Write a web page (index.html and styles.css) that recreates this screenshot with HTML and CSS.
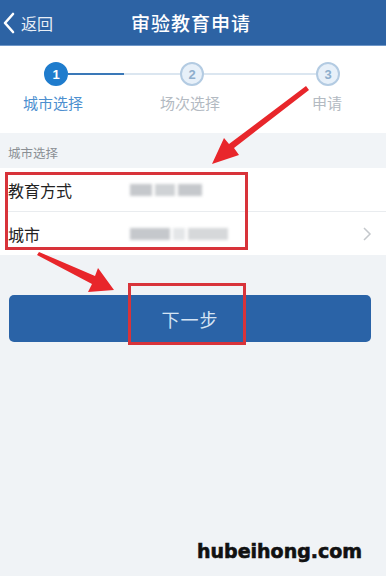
FILE: index.html
```html
<!DOCTYPE html>
<html lang="zh">
<head>
<meta charset="utf-8">
<link rel="stylesheet" href="styles.css">
</head>
<body>
<div class="page">
  <header class="nav">
    <div class="back">
      <svg class="chev" width="14" height="24" viewBox="0 0 14 24"><path d="M11 3 L3 12 L11 21" fill="none" stroke="#fff" stroke-width="2.6" stroke-linecap="round" stroke-linejoin="round"/></svg>
      <span>返回</span>
    </div>
    <div class="title">审验教育申请</div>
  </header>

  <section class="steps">
    <div class="track">
      <div class="circle active">1</div>
      <div class="line"><span class="fill"></span></div>
      <div class="circle">2</div>
      <div class="line"></div>
      <div class="circle">3</div>
    </div>
    <div class="labels">
      <span class="lab on">城市选择</span>
      <span class="lab">场次选择</span>
      <span class="lab">申请</span>
    </div>
  </section>

  <div class="sec-title">城市选择</div>

  <div class="list">
    <div class="row">
      <span class="key">教育方式</span>
      <span class="val"><i class="b1"></i><i class="b2"></i><i class="b3"></i></span>
    </div>
    <div class="row last">
      <span class="key">城市</span>
      <span class="val"><i class="b4"></i><i class="b5"></i><i class="b6"></i></span>
      <svg class="arrow" width="10" height="16" viewBox="0 0 10 16"><path d="M2 2 L8 8 L2 14" fill="none" stroke="#c4c8cc" stroke-width="1.5"/></svg>
    </div>
  </div>

  <div class="btn-wrap">
    <button class="btn">下一步</button>
  </div>

  <div class="mark">hubeihong.com</div>

  <div class="box box1"></div>
  <div class="box box2"></div>
  <svg class="anno" width="386" height="576" viewBox="0 0 386 576">
    <polygon points="306,86 309,90 234,148 239,155 212,164 224,138 229,144" fill="#e8262b"/>
    <polygon points="37,255 39,252 95,276 98,268 114,290 88,292 92,284" fill="#e8262b"/>
  </svg>
</div>
</body>
</html>
```
FILE: styles.css
```css
* { box-sizing: border-box; }
html, body { margin: 0; padding: 0; }
body {
  background: #f0f3f6;
  font-family: "Noto Sans CJK SC", "Noto Sans", sans-serif;
}
.page {
  position: relative;
  width: 386px;
  height: 576px;
  overflow: hidden;
  background: #f0f3f6;
}
.nav {
  position: relative;
  height: 46px;
  background: #2d63a4;
  border-bottom: 1px solid #6f97c8;
  display: flex;
  align-items: center;
  color: #fff;
}
.back {
  display: flex;
  align-items: center;
  gap: 5px;
  padding-left: 2px;
  font-size: 16px;
  color: #e8eef6;
}
.title {
  position: absolute;
  left: 0;
  right: 0;
  text-align: center;
  font-size: 19px;
  font-weight: 500;
  letter-spacing: 1px;
  padding-right: 4px;
  pointer-events: none;
}
.steps {
  background: #fff;
  height: 87px;
  padding-top: 16px;
}
.track {
  display: flex;
  align-items: center;
  padding: 0 46px 0 44px;
}
.circle {
  width: 24px;
  height: 24px;
  border-radius: 50%;
  border: 2px solid #b3cbe2;
  background: #e7f0f9;
  color: #8eaecd;
  font-size: 13px;
  font-weight: 700;
  display: flex;
  align-items: center;
  justify-content: center;
  flex: none;
  font-family: "Liberation Sans", sans-serif;
}
.circle.active {
  background: #1f7ccd;
  border-color: #1f7ccd;
  color: #fff;
}
.line {
  flex: 1;
  height: 2px;
  background: #dbe6f0;
  position: relative;
}
.line .fill {
  position: absolute;
  left: 0;
  top: 0;
  height: 2px;
  width: 56px;
  background: #3a78b8;
}
.labels {
  display: flex;
  justify-content: space-between;
  padding: 6px 19px 0 13px;
  font-size: 15px;
  color: #b3bac2;
}
.lab { width: 80px; text-align: center; }
.lab.on { color: #4d8fcf; }
.sec-title {
  height: 35px;
  padding: 10px 0 0 8px;
  font-size: 12.5px;
  color: #8a8f94;
  background: #f1f4f7;
}
.list {
  background: #fff;
  padding-left: 8px;
}
.row {
  height: 44px;
  display: flex;
  align-items: center;
  border-bottom: 1px solid #e9ecef;
  padding-right: 14px;
}
.row.last { border-bottom: none; height: 43px; }
.key {
  width: 122px;
  font-size: 16px;
  color: #222;
}
.val {
  display: flex;
  gap: 3px;
  filter: blur(1.8px);
  flex: 1;
}
.val i { display: block; height: 12px; background: #c5c8cc; }
.b1 { width: 22px; }
.b2 { width: 20px; background: #cfd2d5 !important; }
.b3 { width: 24px; }
.b4 { width: 40px; }
.b5 { width: 12px; background: #e4e6e8 !important; }
.b6 { width: 40px; background: #d6d8da !important; }
.arrow { flex: none; }
.btn-wrap {
  padding: 40px 15px 0 9px;
}
.btn {
  display: block;
  width: 100%;
  height: 47px;
  border: none;
  border-radius: 5px;
  background: #2a63a7;
  color: #d5e4f4;
  font-size: 18px;
  font-family: "Noto Sans CJK SC", sans-serif;
  letter-spacing: 1px;
}
.mark {
  position: absolute;
  left: 197px;
  top: 540px;
  font-family: "DejaVu Sans", sans-serif;
  font-weight: 700;
  font-size: 19px;
  color: #111;
  -webkit-text-stroke: 0.6px #111;
}
.box {
  position: absolute;
  border: 3px solid #d8333a;
}
.box1 { left: 5px; top: 172px; width: 243px; height: 78px; }
.box2 { left: 128px; top: 283px; width: 118px; height: 62px; }
.anno { position: absolute; left: 0; top: 0; pointer-events: none; }
```
